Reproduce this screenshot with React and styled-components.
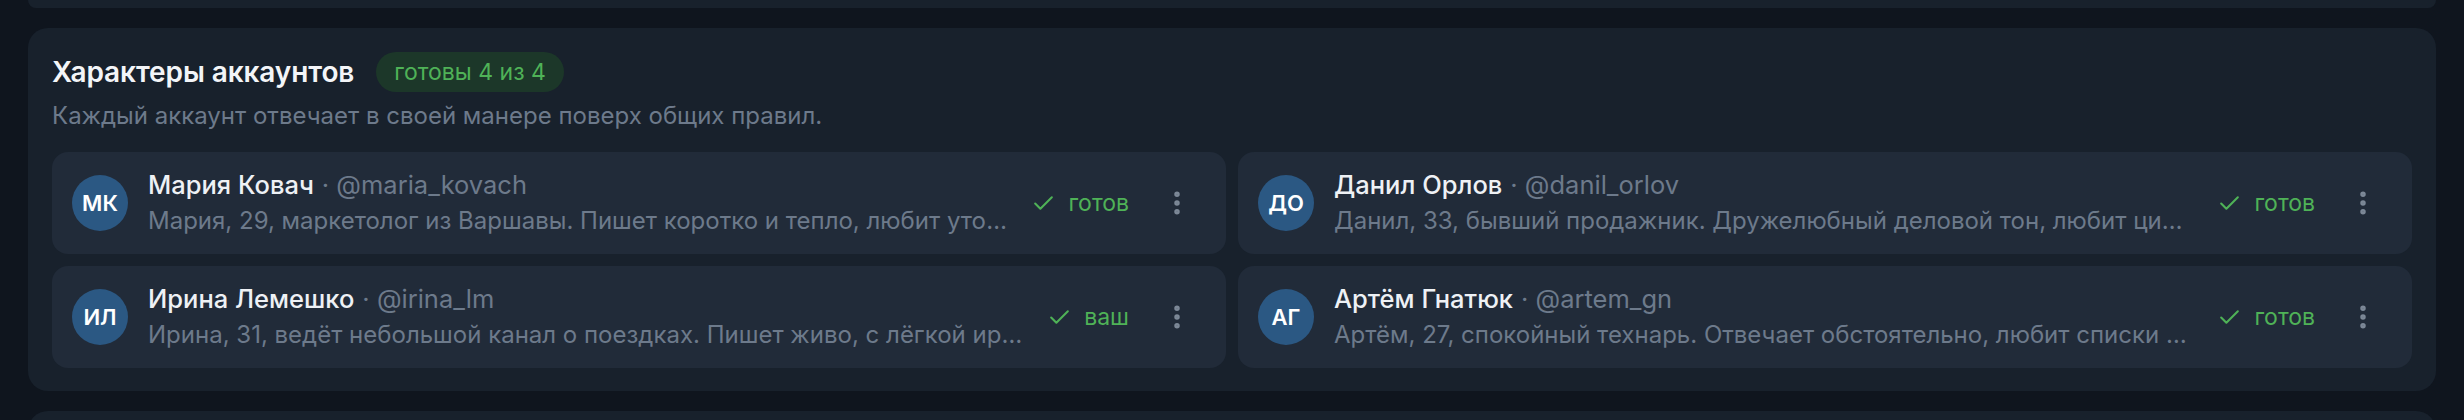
import * as React from "react";
import styled, { createGlobalStyle } from "styled-components";
import { Check, EllipsisVertical } from "lucide-react";

const GlobalStyle = createGlobalStyle`
  html, body {
    margin: 0;
    padding: 0;
    background: #0f151e;
  }
  body {
    font-family: Inter, "Noto Sans", sans-serif;
    -webkit-font-smoothing: antialiased;
  }
`;

const Page = styled.div`
  display: flex;
  flex-direction: column;
  gap: 20px;
  padding: 0 28px;
  height: 420px;
  overflow: hidden;
`;

const StubCard = styled.div`
  height: ${(props) => props.height}px;
  flex-shrink: 0;
  background: #18212c;
  border-radius: ${(props) => (props.top ? "0 0 20px 20px" : "20px 20px 0 0")};
`;

const Section = styled.section`
  background: #18212c;
  border-radius: 20px;
  padding: 24px 24px 23px;
  flex-shrink: 0;
`;

const Header = styled.div`
  display: flex;
  align-items: center;
  gap: 22px;
  height: 40px;
`;

const Title = styled.h2`
  margin: 0;
  font-size: 28px;
  font-weight: 600;
  color: #f3f5f8;
  letter-spacing: -0.1px;
`;

const Badge = styled.span`
  display: inline-flex;
  align-items: center;
  height: 40px;
  padding: 0 18px;
  border-radius: 20px;
  background: #1c3729;
  color: #4fb257;
  font-size: 23px;
`;

const Subtitle = styled.p`
  margin: 9px 0 21px;
  font-size: 24px;
  line-height: 30px;
  color: #6d7a8b;
`;

const Grid = styled.div`
  display: grid;
  grid-template-columns: 1fr 1fr;
  gap: 12px;
`;

const Card = styled.div`
  display: flex;
  align-items: center;
  height: 102px;
  padding: 0 29px 0 20px;
  background: #212b39;
  border-radius: 16px;
  min-width: 0;
`;

const Avatar = styled.div`
  width: 56px;
  height: 56px;
  flex-shrink: 0;
  border-radius: 50%;
  background: #2b5883;
  color: #ffffff;
  display: flex;
  align-items: center;
  justify-content: center;
  font-size: 22px;
  font-weight: 600;
`;

const Info = styled.div`
  flex: 1;
  min-width: 0;
  margin-left: 20px;
  margin-right: 24px;
  display: flex;
  flex-direction: column;
`;

const NameRow = styled.div`
  font-size: 25.5px;
  line-height: 36px;
  white-space: nowrap;
  overflow: hidden;
  text-overflow: ellipsis;
`;

const Name = styled.span`
  color: #eef1f5;
  font-weight: 500;
`;

const Handle = styled.span`
  color: #6d7a8b;
  margin-left: 8px;
`;

const Bio = styled.div`
  font-size: 24px;
  line-height: 36px;
  color: #6d7a8b;
  white-space: nowrap;
  overflow: hidden;
  text-overflow: ellipsis;
`;

const Status = styled.div`
  display: flex;
  align-items: center;
  gap: 12px;
  color: #4fb257;
  font-size: 23px;
  flex-shrink: 0;
`;

const MenuButton = styled.button`
  width: 40px;
  height: 40px;
  margin-left: 28px;
  flex-shrink: 0;
  display: flex;
  align-items: center;
  justify-content: center;
  background: transparent;
  border: none;
  padding: 0;
  color: #7c8897;
  cursor: pointer;
`;

const ACCOUNTS = [
  {
    id: "mk",
    initials: "МК",
    name: "Мария Ковач",
    handle: "@maria_kovach",
    bio: "Мария, 29, маркетолог из Варшавы. Пишет коротко и тепло, любит уточнять детали и задавать вопросы.",
    status: "готов",
  },
  {
    id: "do",
    initials: "ДО",
    name: "Данил Орлов",
    handle: "@danil_orlov",
    bio: "Данил, 33, бывший продажник. Дружелюбный деловой тон, любит цифры и конкретику.",
    status: "готов",
  },
  {
    id: "il",
    initials: "ИЛ",
    name: "Ирина Лемешко",
    handle: "@irina_lm",
    bio: "Ирина, 31, ведёт небольшой канал о поездках. Пишет живо, с лёгкой иронией и эмодзи.",
    status: "ваш",
  },
  {
    id: "ag",
    initials: "АГ",
    name: "Артём Гнатюк",
    handle: "@artem_gn",
    bio: "Артём, 27, спокойный технарь. Отвечает обстоятельно, любит списки и пошаговые объяснения.",
    status: "готов",
  },
];

const AccountCard = ({ account }) => (
  <Card>
    <Avatar>{account.initials}</Avatar>
    <Info>
      <NameRow>
        <Name>{account.name}</Name>
        <Handle>· {account.handle}</Handle>
      </NameRow>
      <Bio>{account.bio}</Bio>
    </Info>
    <Status>
      <Check size={25} strokeWidth={2} />
      {account.status}
    </Status>
    <MenuButton type="button" aria-label="Меню">
      <EllipsisVertical size={30} strokeWidth={2.4} />
    </MenuButton>
  </Card>
);

export default function App() {
  return (
    <>
      <GlobalStyle />
      <Page>
        <StubCard height={8} top />
        <Section>
          <Header>
            <Title>Характеры аккаунтов</Title>
            <Badge>готовы 4 из 4</Badge>
          </Header>
          <Subtitle>Каждый аккаунт отвечает в своей манере поверх общих правил.</Subtitle>
          <Grid>
            {ACCOUNTS.map((account) => (
              <AccountCard key={account.id} account={account} />
            ))}
          </Grid>
        </Section>
        <StubCard height={20} />
      </Page>
    </>
  );
}
